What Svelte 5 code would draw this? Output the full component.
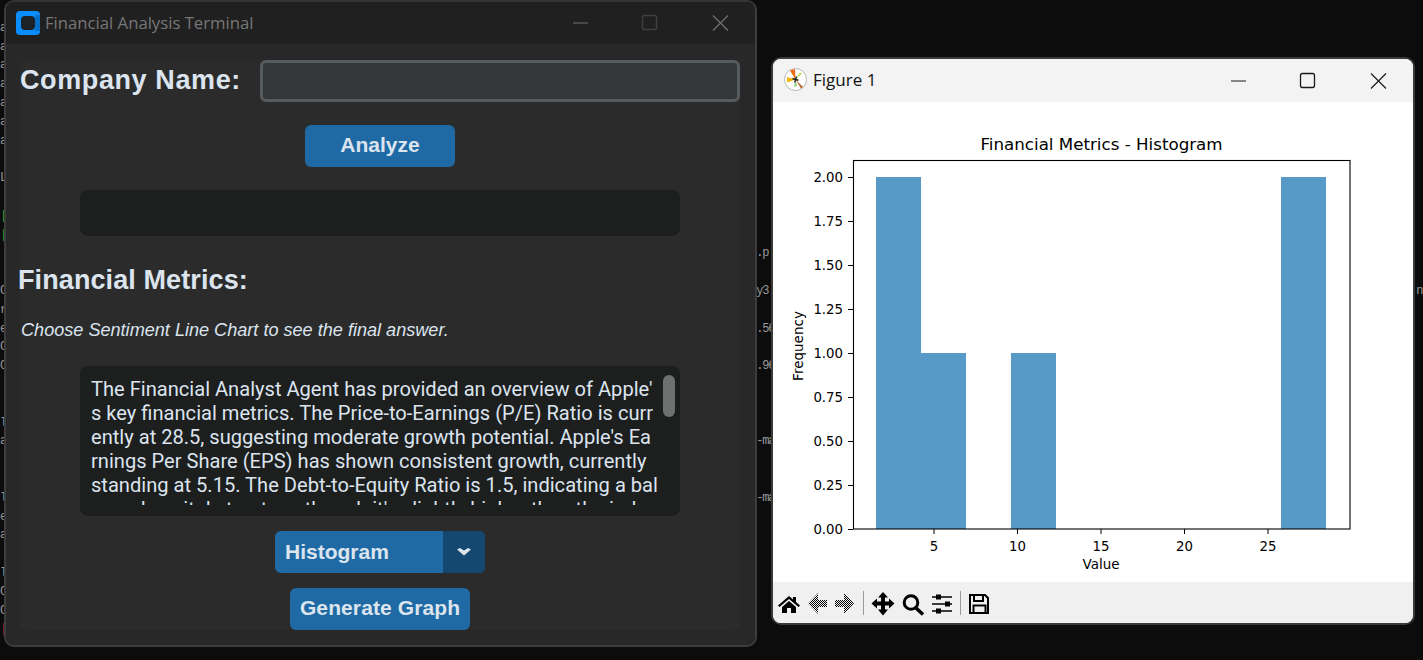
<script>
  const pad = (col, text) => ' '.repeat(col) + text;
  const terminal = [
    { t: pad(9, 'Package audit 15 1.1.1.1 00-00-0000 Package audit 15 1.1.1.1') },
    { t: 'at' }, { t: 'at' }, { t: 'at' }, { t: 'at' }, { t: 'at' }, { t: 'at' }, { t: 'at' }, { t: '' }, { t: 'L' }, { t: '' },
    { t: '|', c: 'green' }, { t: '|', c: 'green' }, { t: pad(126, '.p') }, { t: '' },
    { t: 'C' + pad(125, 'y3.') + pad(106, '.n') }, { t: 'r' }, { t: 'el' + pad(124, '.56') }, { t: 'C' }, { t: 'C' + pad(125, '.96') },
    { t: '' }, { t: '' }, { t: 'l' }, { t: 'at' + pad(124, '-ma') }, { t: '' }, { t: '' },
    { t: 'l' + pad(125, '-ma') }, { t: 'el' }, { t: 'at' }, { t: '' }, { t: 'l' }, { t: 'C' }, { t: 'C' }, { t: '|', c: 'red' }
  ];
  const answer = [
    "The Financial Analyst Agent has provided an overview of Apple'",
    's key financial metrics. The Price-to-Earnings (P/E) Ratio is curr',
    "ently at 28.5, suggesting moderate growth potential. Apple's Ea",
    'rnings Per Share (EPS) has shown consistent growth, currently',
    'standing at 5.15. The Debt-to-Equity Ratio is 1.5, indicating a bal',
    "anced capital structure, though it's slightly higher than the ind"
  ];
  const yTicks = [['2.00', 177], ['1.75', 221], ['1.50', 265], ['1.25', 309], ['1.00', 353], ['0.75', 397], ['0.50', 441], ['0.25', 485], ['0.00', 529]];
  const xTicks = [['5', 934], ['10', 1017.5], ['15', 1101], ['20', 1184.5], ['25', 1268]];
  const bars = [[876, 177], [921, 353], [1011, 353], [1281, 177]];
</script>

<div class="desktop">
  <div class="terminal">
    {#each terminal as row}
      <div class="term-row {row.c ?? ''}">{row.t}</div>
    {/each}
  </div>

  <section class="window analysis">
    <header class="ctk-title">
      <svg class="ctk-logo" viewBox="0 0 24 24" aria-hidden="true">
        <rect width="24" height="24" rx="4" fill="#0a8eff" />
        <path d="M19 4h5v16h-6a7 4 0 0 0 1-4V8a6 6 0 0 0 0-4z" fill="#0670c8" />
        <rect x="5" y="5" width="14" height="14" rx="4" fill="#1d2226" />
      </svg>
      <span class="ctk-caption">Financial Analysis Terminal</span>
      <svg class="controls" viewBox="0 0 170 24" aria-hidden="true">
        <path d="M0 12h15" stroke="#707070" fill="none" />
        <rect x="69.500" y="4.500" width="14" height="14" rx="2" stroke="#3f3f3f" stroke-width="1.500" fill="none" />
        <path d="M140 4.500l15 15M155 4.500l-15 15" stroke="#707070" stroke-width="1.200" fill="none" />
      </svg>
    </header>
    <main class="frame">
      <div class="name-row">
        <span class="label">Company Name:</span>
        <div class="entry"></div>
      </div>
      <button class="btn analyze">Analyze</button>
      <div class="status"></div>
      <h2 class="metrics">Financial Metrics:</h2>
      <p class="note">Choose Sentiment Line Chart to see the final answer.</p>
      <div class="answer">
        <div class="answer-clip">
          {#each answer as line}
            <div>{line}</div>
          {/each}
        </div>
        <span class="thumb"></span>
      </div>
      <div class="select">
        <span class="select-value">Histogram</span>
        <span class="select-arrow">
          <svg width="14" height="8" viewBox="0 0 14 8" aria-hidden="true">
            <path d="M0 1.500L3 0l4 2.500L11 0l3 1.500L7 7.500z" fill="#dce4ee" />
          </svg>
        </span>
      </div>
      <button class="btn generate">Generate Graph</button>
    </main>
  </section>

  <section class="window figure">
    <header class="fig-title">
      <svg class="mpl-logo" viewBox="0 0 24 24" aria-hidden="true">
        <circle cx="11.500" cy="11.500" r="11" fill="#fff" stroke="#b5b5b5" />
        <path d="M11.500 11.500L6 2.500 11 1z" fill="#ef6a12" />
        <path d="M11.500 11.500L3 9v5.500z" fill="#f2b705" />
        <path d="M11.500 11.500L19 19l-2 1.500z" fill="#b9622f" />
        <path d="M11.500 11.500L16 4.500l2 1z" fill="#b3d94a" />
        <path d="M11.500 11.500l1.500 7h-3z" fill="#8ed47a" />
        <path d="M11.500 11.500l-3-1M11.500 11.500l3 .8M11.500 11.500l-.8 3M11.500 11.500l1-3" stroke="#222" stroke-width="1.400" />
      </svg>
      <span class="fig-caption">Figure 1</span>
      <svg class="controls fig-controls" viewBox="0 0 156 24" aria-hidden="true">
        <path d="M0 12h15" stroke="#1a1a1a" fill="none" />
        <rect x="69.500" y="4.500" width="14" height="14" rx="2" stroke="#1a1a1a" stroke-width="1.300" fill="none" />
        <path d="M140 4.500l15 15M155 4.500l-15 15" stroke="#1a1a1a" stroke-width="1.200" fill="none" />
      </svg>
    </header>
    <svg class="chart" viewBox="773 102 640 480" aria-label="Financial Metrics - Histogram">
      {#each bars as [x, y]}
        <rect x={x} y={y} width="45" height={529 - y} fill="#5799c7" />
      {/each}
      <rect x="853.500" y="160.500" width="496.500" height="368.500" fill="none" stroke="#000" stroke-width="1.100" />
      {#each yTicks as [label, y]}
        <path d={`M848 ${y + 0.5}h5`} stroke="#000" stroke-width="1" />
        <text class="tick" x="843" y={y + 5} text-anchor="end">{label}</text>
      {/each}
      {#each xTicks as [label, x]}
        <path d={`M${x} 529v5`} stroke="#000" stroke-width="1" />
        <text class="tick" x={x} y="551" text-anchor="middle">{label}</text>
      {/each}
      <text class="title" x="1101.500" y="150" text-anchor="middle">Financial Metrics - Histogram</text>
      <text class="axis" x="1101" y="569" text-anchor="middle">Value</text>
      <text class="axis" transform="translate(803 346) rotate(-90)" text-anchor="middle">Frequency</text>
    </svg>
    <footer class="toolbar">
      <svg class="tools" viewBox="773 582 220 41" aria-hidden="true">
        <defs>
          <pattern id="dither" width="2" height="2" patternUnits="userSpaceOnUse">
            <rect width="1" height="1" fill="#000" />
            <rect x="1" y="1" width="1" height="1" fill="#000" />
          </pattern>
        </defs>
        <path d="M789 596l-11 9.500 1.500 1.500 9.500-8 9.500 8 1.500-1.500-4-3.500v-5h-3v2.500z" fill="#000" />
        <path d="M789 601l-7 6v6h5v-5h4v5h5v-6z" fill="#000" />
        <path d="M818 593l-10 10.500 10 10.500v-7h9v-7h-9z" fill="url(#dither)" />
        <path d="M844 593l10 10.500-10 10.500v-7h-9v-7h9z" fill="url(#dither)" />
        <path d="M863.500 591v24M960.500 591v24" stroke="#9a9a9a" />
        <path d="M883 592l5 5.500h-3v4h4v-3l5.500 5-5.500 5v-3h-4v4h3l-5 6-5-6h3v-4h-4v3l-5.500-5 5.500-5v3h4v-4h-3z" fill="#000" />
        <circle cx="911" cy="602.500" r="6.800" fill="none" stroke="#000" stroke-width="3" />
        <path d="M916 608l7 6.500" stroke="#000" stroke-width="3.500" />
        <path d="M932 597h20M932 604h20M932 611h20" stroke="#000" stroke-width="1.300" />
        <rect x="936" y="594.500" width="5" height="5" fill="#000" />
        <rect x="945" y="601.500" width="5" height="5" fill="#000" />
        <rect x="936" y="608.500" width="5" height="5" fill="#000" />
        <path d="M970 595h15l3 3v15h-18z" fill="none" stroke="#000" stroke-width="2" />
        <path d="M974 595.500v5.500h9v-5.500M973.500 612.500v-7h12v7" fill="none" stroke="#000" stroke-width="2" />
      </svg>
    </footer>
  </section>
</div>

<style>
  :global(body) {
    margin: 0;
    background: #0c0c0c;
  }

  .desktop {
    position: relative;
    width: 1423px;
    height: 660px;
    overflow: hidden;
    background: #0c0c0c;
  }

  .terminal {
    font: 12px/18.8px "Liberation Mono", monospace;
    letter-spacing: -1.2px;
    color: #9a9a9a;
    white-space: pre;
    height: 660px;
    overflow: hidden;
  }

  .term-row {
    height: 18.8px;
  }

  .green {
    color: #2f9e2f;
  }

  .red {
    color: #b02030;
  }

  .window {
    position: absolute;
    box-sizing: border-box;
    display: flex;
    flex-direction: column;
    overflow: hidden;
  }

  .analysis {
    left: 4px;
    top: 0;
    width: 753px;
    height: 647px;
    border: 2px solid #3d3d3d;
    border-top-color: rgba(80, 80, 80, 0.6);
    border-radius: 10px;
    background: #282828;
    background-clip: padding-box;
  }

  .ctk-title {
    flex: none;
    height: 42px;
    display: flex;
    align-items: center;
    background: #202020;
    padding-left: 10px;
  }

  .ctk-logo {
    width: 24px;
    height: 24px;
    margin-right: 5px;
  }

  .ctk-caption {
    font: 16.700px "Open Sans", sans-serif;
    color: #777;
    margin-bottom: 2px;
  }

  .controls {
    width: 170px;
    height: 24px;
    margin-left: auto;
    margin-right: 12px;
    margin-bottom: 1px;
  }

  .frame {
    box-sizing: border-box;
    width: 720px;
    height: 570px;
    margin: 16px 0 0 14px;
    background: #2b2b2b;
    border-radius: 6px;
    display: flex;
    flex-direction: column;
    align-items: center;
    color: #dce4ee;
  }

  .name-row {
    align-self: stretch;
    height: 42px;
    display: flex;
    align-items: center;
    justify-content: space-between;
  }

  .label,
  .metrics {
    font: bold 27px "Liberation Sans", sans-serif;
  }

  .label {
    letter-spacing: 0.6px;
    margin-bottom: 2px;
  }

  .entry {
    box-sizing: border-box;
    width: 480px;
    height: 42px;
    border: 3px solid #565b5e;
    border-radius: 6px;
    background: #343638;
  }

  .btn {
    border: 0;
    padding: 0 0 2px;
    background: #1f6aa5;
    color: #dce4ee;
    border-radius: 6px;
    height: 42px;
    font: bold 21px "Liberation Sans", sans-serif;
  }

  .analyze {
    width: 150px;
    margin-top: 23px;
  }

  .status {
    width: 600px;
    height: 46px;
    margin-top: 23px;
    background: #1d1e1e;
    border-radius: 8px;
  }

  .metrics {
    align-self: flex-start;
    margin: 29px 0 0 -2px;
    line-height: 30px;
    letter-spacing: 0.1px;
  }

  .note {
    align-self: flex-start;
    margin: 25px 0 0 1px;
    font: italic 18.100px/20px "Liberation Sans", sans-serif;
  }

  .answer {
    box-sizing: border-box;
    position: relative;
    width: 600px;
    height: 150px;
    margin-top: 26px;
    padding: 11px;
    background: #1d1e1e;
    border-radius: 8px;
    font: 20.100px/24px Roboto, sans-serif;
    white-space: pre;
  }

  .answer-clip {
    height: 128px;
    overflow: hidden;
  }

  .thumb {
    position: absolute;
    top: 9px;
    right: 5px;
    width: 12px;
    height: 42px;
    border-radius: 6px;
    background: #6f7070;
  }

  .select {
    width: 210px;
    height: 42px;
    margin-top: 15px;
    display: flex;
    border-radius: 6px;
    overflow: hidden;
    background: #1f6aa5;
    font: bold 21px/42px "Liberation Sans", sans-serif;
  }

  .select-value {
    flex: 1;
    padding-left: 10px;
  }

  .select-arrow {
    width: 42px;
    display: flex;
    align-items: center;
    justify-content: center;
    background: #144870;
  }

  .generate {
    width: 180px;
    margin-top: 15px;
    letter-spacing: 0.1px;
  }

  .figure {
    left: 771px;
    top: 57px;
    width: 644px;
    height: 568px;
    border: 2px solid #3a3a3a;
    border-radius: 10px;
    background: #fff;
  }

  .fig-title {
    flex: none;
    height: 43px;
    display: flex;
    align-items: center;
    background: #f3f3f3;
    padding-left: 11px;
  }

  .mpl-logo {
    width: 24px;
    height: 24px;
    margin-right: 5px;
    margin-bottom: 2px;
  }

  .fig-caption {
    font: 17px "Open Sans", sans-serif;
    color: #111;
    margin-bottom: 2px;
  }

  .fig-controls {
    width: 156px;
    margin-right: 26px;
    margin-bottom: 0;
  }

  .chart {
    flex: none;
    display: block;
    width: 640px;
    height: 480px;
  }

  .chart text {
    font-family: "DejaVu Sans", sans-serif;
    fill: #000;
  }

  .chart .tick {
    font-size: 13.300px;
  }

  .chart .axis {
    font-size: 13.500px;
  }

  .chart .title {
    font-size: 16.700px;
  }

  .toolbar {
    flex: 1;
    background: #f0f0f0;
  }

  .tools {
    display: block;
    width: 220px;
    height: 41px;
  }
</style>
